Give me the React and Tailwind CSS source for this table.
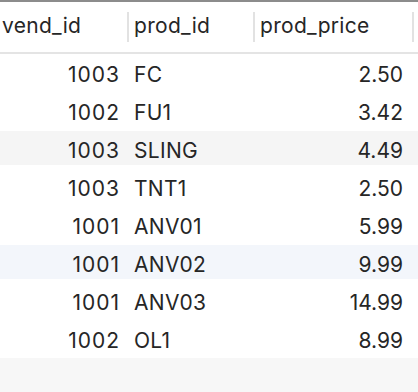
const rows = [
  ["1003", "FC", "2.50", ""],
  ["1002", "FU1", "3.42", ""],
  ["1003", "SLING", "4.49", "bg-[#f5f5f5]"],
  ["1003", "TNT1", "2.50", ""],
  ["1001", "ANV01", "5.99", ""],
  ["1001", "ANV02", "9.99", "bg-[#f3f6fb]"],
  ["1001", "ANV03", "14.99", ""],
  ["1002", "OL1", "8.99", ""],
];

export default function App() {
  return (
    <div className="w-[418px] h-[392px] bg-white overflow-hidden font-['Inter',sans-serif] text-[21px] text-[#262626]">
      <div className="h-[2px] bg-[#8c8c8c]"></div>
      {/* header */}
      <div className="flex h-[52px] items-center border-b-2 border-[#e4e4e4]">
        <div className="w-[127px] pl-[2px] pb-[2px] tracking-[0.3px]">vend_id</div>
        <div className="w-[2px] h-[30px] bg-[#e2e2e2]"></div>
        <div className="w-[124px] pl-[5px] pb-[2px] tracking-[0.3px]">prod_id</div>
        <div className="w-[2px] h-[30px] bg-[#e2e2e2]"></div>
        <div className="w-[157px] pl-[5px] pb-[2px] tracking-[0.3px]">prod_price</div>
        <div className="w-[2px] h-[30px] bg-[#e2e2e2]"></div>
      </div>
      {/* rows */}
      <div className="flex flex-col">
        {rows.map(([v, p, price, bg], i) => (
          <div key={i} className="h-[38px] pt-[1px]">
            <div className={"flex h-[34px] items-center pt-[6px] " + bg}>
              <div className="w-[127px] pr-[7px] text-right tracking-[1px]">{v}</div>
              <div className="w-[126px] pl-[7px] tracking-[0.3px]">{p}</div>
              <div className="w-[159px] pr-[9px] text-right">{price}</div>
            </div>
          </div>
        ))}
      </div>
      <div className="h-[40px] bg-[#f7f7f7]"></div>
    </div>
  );
}
